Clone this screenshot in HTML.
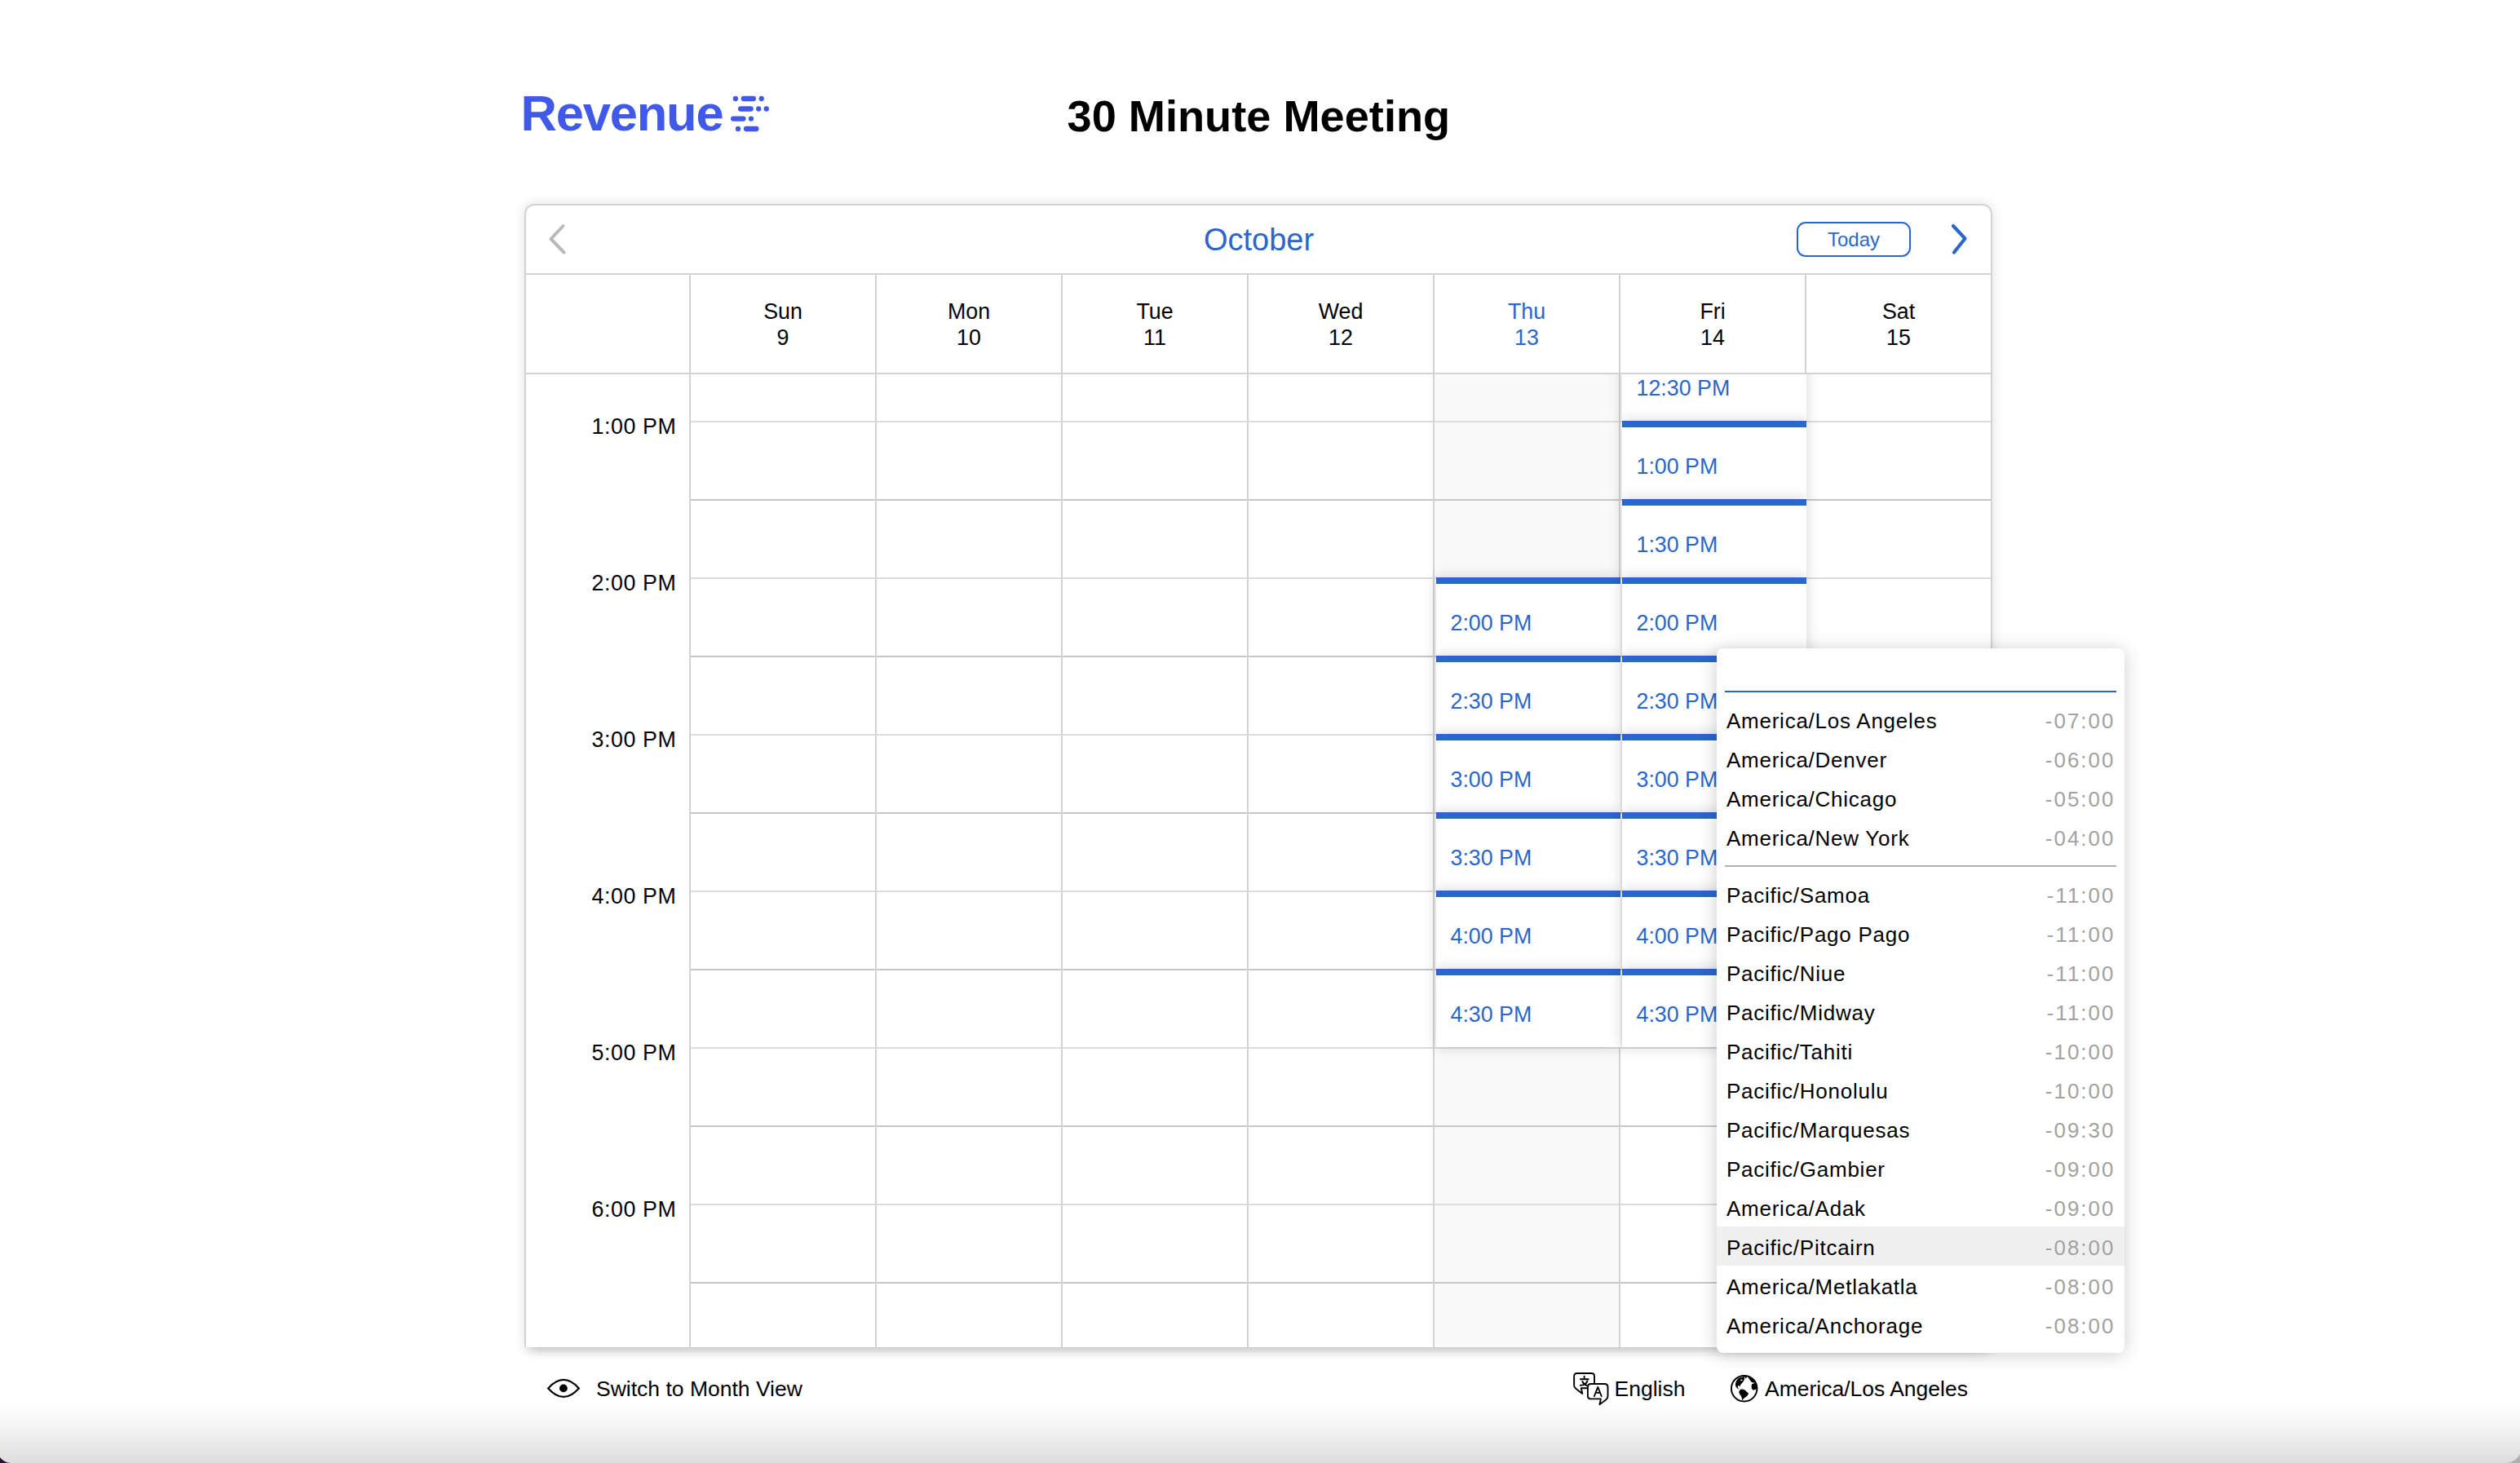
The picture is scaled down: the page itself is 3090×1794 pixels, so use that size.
<!DOCTYPE html>
<html><head><meta charset="utf-8"><title>30 Minute Meeting</title>
<style>
html,body{margin:0;padding:0;}
body{width:3090px;height:1794px;position:relative;overflow:hidden;background:#fff;font-family:"Liberation Sans",sans-serif;}
.a{position:absolute;}
.t{position:absolute;white-space:nowrap;}
.card{position:absolute;width:226px;height:88px;border-top:8px solid #2a66cb;background:#fff;box-shadow:0 0 16px rgba(0,0,0,0.17);}
.card span{position:absolute;left:17.5px;font-size:26.8px;line-height:26.8px;color:#2a66cb;white-space:nowrap;}
</style></head><body>
<div class="t" style="top:108.14px;font-size:61.5px;line-height:61.5px;color:#4159e8;font-weight:700;letter-spacing:-1.2px;left:638.50px;">Revenue</div>
<svg class="a" style="left:890px;top:112px" width="56" height="54" viewBox="890 112 56 54">
<g stroke="#4159e8" stroke-width="6.3" stroke-linecap="round" fill="none">
<path d="M901.9 121 L901.9 121 M911.85 121 L923.85 121 M933.7 121 L933.7 121"/>
<path d="M908.15 133.5 L920.65 133.5 M930.2 133.5 L930.2 133.5 M939.7 133.5 L939.7 133.5"/>
<path d="M899.15 145.6 L911.45 145.6 M921 145.6 L921 145.6"/>
<path d="M905 158 L905 158 M915.05 158 L927.35 158"/>
</g></svg>
<div class="t" style="top:114.92px;font-size:54.2px;line-height:54.2px;color:#000;font-weight:700;left:1308.50px;">30 Minute Meeting</div>
<div class="a" style="left:643px;top:250px;width:1800px;height:1402px;background:#fff;box-shadow:0 0 14px rgba(0,0,0,0.13);border-radius:12px 12px 0 0"></div>
<div class="a" style="left:649px;top:1612px;width:1788px;height:40px;background:#fff;box-shadow:0 5px 14px rgba(0,0,0,0.19);clip-path:inset(40px -40px -40px -40px)"></div>
<div class="a" style="left:643px;top:459px;width:1800px;height:1193px;overflow:hidden">
<div class="a" style="left:1116px;top:0;width:226px;height:1193px;background:#f9f9f9"></div>
<div class="a" style="left:204px;top:57px;width:1594px;height:2px;background:#dcdcdc"></div>
<div class="a" style="left:204px;top:153px;width:1594px;height:2px;background:#c6c6c6"></div>
<div class="a" style="left:204px;top:249px;width:1594px;height:2px;background:#dcdcdc"></div>
<div class="a" style="left:204px;top:345px;width:1594px;height:2px;background:#c6c6c6"></div>
<div class="a" style="left:204px;top:441px;width:1594px;height:2px;background:#dcdcdc"></div>
<div class="a" style="left:204px;top:537px;width:1594px;height:2px;background:#c6c6c6"></div>
<div class="a" style="left:204px;top:633px;width:1594px;height:2px;background:#dcdcdc"></div>
<div class="a" style="left:204px;top:729px;width:1594px;height:2px;background:#c6c6c6"></div>
<div class="a" style="left:204px;top:825px;width:1594px;height:2px;background:#dcdcdc"></div>
<div class="a" style="left:204px;top:921px;width:1594px;height:2px;background:#c6c6c6"></div>
<div class="a" style="left:204px;top:1017px;width:1594px;height:2px;background:#dcdcdc"></div>
<div class="a" style="left:204px;top:1113px;width:1594px;height:2px;background:#c6c6c6"></div>
<div class="a" style="left:202px;top:0;width:2px;height:1193px;background:#d3d3d3"></div>
<div class="a" style="left:430px;top:0;width:2px;height:1193px;background:#d3d3d3"></div>
<div class="a" style="left:658px;top:0;width:2px;height:1193px;background:#d3d3d3"></div>
<div class="a" style="left:886px;top:0;width:2px;height:1193px;background:#d3d3d3"></div>
<div class="a" style="left:1114px;top:0;width:2px;height:1193px;background:#d3d3d3"></div>
<div class="a" style="left:1342px;top:0;width:2px;height:1193px;background:#d3d3d3"></div>
<div class="a" style="left:1570px;top:0;width:2px;height:1193px;background:#d3d3d3"></div>
<div class="t" style="right:1613.5px;top:51.31px;font-size:26.8px;line-height:26.8px;text-align:right;letter-spacing:0.6px">1:00 PM</div>
<div class="t" style="right:1613.5px;top:243.31px;font-size:26.8px;line-height:26.8px;text-align:right;letter-spacing:0.6px">2:00 PM</div>
<div class="t" style="right:1613.5px;top:435.31px;font-size:26.8px;line-height:26.8px;text-align:right;letter-spacing:0.6px">3:00 PM</div>
<div class="t" style="right:1613.5px;top:627.31px;font-size:26.8px;line-height:26.8px;text-align:right;letter-spacing:0.6px">4:00 PM</div>
<div class="t" style="right:1613.5px;top:819.31px;font-size:26.8px;line-height:26.8px;text-align:right;letter-spacing:0.6px">5:00 PM</div>
<div class="t" style="right:1613.5px;top:1011.31px;font-size:26.8px;line-height:26.8px;text-align:right;letter-spacing:0.6px">6:00 PM</div>
<div class="card" style="left:1118px;top:249px"><span style="top:35.31px">2:00 PM</span></div>
<div class="card" style="left:1118px;top:345px"><span style="top:35.31px">2:30 PM</span></div>
<div class="card" style="left:1118px;top:441px"><span style="top:35.31px">3:00 PM</span></div>
<div class="card" style="left:1118px;top:537px"><span style="top:35.31px">3:30 PM</span></div>
<div class="card" style="left:1118px;top:633px"><span style="top:35.31px">4:00 PM</span></div>
<div class="card" style="left:1118px;top:729px"><span style="top:35.31px">4:30 PM</span></div>
<div class="card" style="left:1346px;top:-39px"><span style="top:35.31px">12:30 PM</span></div>
<div class="card" style="left:1346px;top:57px"><span style="top:35.31px">1:00 PM</span></div>
<div class="card" style="left:1346px;top:153px"><span style="top:35.31px">1:30 PM</span></div>
<div class="card" style="left:1346px;top:249px"><span style="top:35.31px">2:00 PM</span></div>
<div class="card" style="left:1346px;top:345px"><span style="top:35.31px">2:30 PM</span></div>
<div class="card" style="left:1346px;top:441px"><span style="top:35.31px">3:00 PM</span></div>
<div class="card" style="left:1346px;top:537px"><span style="top:35.31px">3:30 PM</span></div>
<div class="card" style="left:1346px;top:633px"><span style="top:35.31px">4:00 PM</span></div>
<div class="card" style="left:1346px;top:729px"><span style="top:35.31px">4:30 PM</span></div>
</div>
<div class="a" style="left:643px;top:250px;width:1800px;height:1402px;border:2px solid #d3d3d3;border-bottom:none;border-radius:12px 12px 0 0;box-sizing:border-box"></div>
<div class="a" style="left:645px;top:335px;width:1796px;height:2px;background:#d3d3d3"></div>
<div class="a" style="left:645px;top:457px;width:1796px;height:2px;background:#d3d3d3"></div>
<div class="a" style="left:845px;top:337px;width:2px;height:120px;background:#d3d3d3"></div>
<div class="a" style="left:1073px;top:337px;width:2px;height:120px;background:#d3d3d3"></div>
<div class="a" style="left:1301px;top:337px;width:2px;height:120px;background:#d3d3d3"></div>
<div class="a" style="left:1529px;top:337px;width:2px;height:120px;background:#d3d3d3"></div>
<div class="a" style="left:1757px;top:337px;width:2px;height:120px;background:#d3d3d3"></div>
<div class="a" style="left:1985px;top:337px;width:2px;height:120px;background:#d3d3d3"></div>
<div class="a" style="left:2213px;top:337px;width:2px;height:120px;background:#d3d3d3"></div>
<div class="t" style="top:369.11px;font-size:26.8px;line-height:26.8px;color:#000;left:847.00px;width:226px;text-align:center;">Sun</div>
<div class="t" style="top:401.31px;font-size:26.8px;line-height:26.8px;color:#000;left:847.00px;width:226px;text-align:center;">9</div>
<div class="t" style="top:369.11px;font-size:26.8px;line-height:26.8px;color:#000;left:1075.00px;width:226px;text-align:center;">Mon</div>
<div class="t" style="top:401.31px;font-size:26.8px;line-height:26.8px;color:#000;left:1075.00px;width:226px;text-align:center;">10</div>
<div class="t" style="top:369.11px;font-size:26.8px;line-height:26.8px;color:#000;left:1303.00px;width:226px;text-align:center;">Tue</div>
<div class="t" style="top:401.31px;font-size:26.8px;line-height:26.8px;color:#000;left:1303.00px;width:226px;text-align:center;">11</div>
<div class="t" style="top:369.11px;font-size:26.8px;line-height:26.8px;color:#000;left:1531.00px;width:226px;text-align:center;">Wed</div>
<div class="t" style="top:401.31px;font-size:26.8px;line-height:26.8px;color:#000;left:1531.00px;width:226px;text-align:center;">12</div>
<div class="t" style="top:369.11px;font-size:26.8px;line-height:26.8px;color:#2a66cb;left:1759.00px;width:226px;text-align:center;">Thu</div>
<div class="t" style="top:401.31px;font-size:26.8px;line-height:26.8px;color:#2a66cb;left:1759.00px;width:226px;text-align:center;">13</div>
<div class="t" style="top:369.11px;font-size:26.8px;line-height:26.8px;color:#000;left:1987.00px;width:226px;text-align:center;">Fri</div>
<div class="t" style="top:401.31px;font-size:26.8px;line-height:26.8px;color:#000;left:1987.00px;width:226px;text-align:center;">14</div>
<div class="t" style="top:369.11px;font-size:26.8px;line-height:26.8px;color:#000;left:2215.00px;width:226px;text-align:center;">Sat</div>
<div class="t" style="top:401.31px;font-size:26.8px;line-height:26.8px;color:#000;left:2215.00px;width:226px;text-align:center;">15</div>
<div class="t" style="top:274.83px;font-size:38px;line-height:38px;color:#2a66cb;left:1343.50px;width:400px;text-align:center;">October</div>
<div class="a" style="left:2203px;top:272px;width:140px;height:43px;border:2px solid #2a66cb;border-radius:11px;box-sizing:border-box"></div>
<div class="t" style="top:281.68px;font-size:24px;line-height:24px;color:#2a66cb;left:2203.00px;width:140px;text-align:center;">Today</div>
<svg class="a" style="left:660px;top:265px" width="50" height="56" viewBox="660 265 50 56"><path d="M690.5 277 L675.5 293 L691.5 309.5" stroke="#b9b9b9" stroke-width="4" fill="none" stroke-linecap="round" stroke-linejoin="round"/></svg>
<svg class="a" style="left:2380px;top:265px" width="50" height="56" viewBox="2380 265 50 56"><path d="M2395 277 L2409.5 292.5 L2396 309.5" stroke="#2a66cb" stroke-width="4.2" fill="none" stroke-linecap="round" stroke-linejoin="round"/></svg>
<div class="a" style="left:2105px;top:795px;width:500px;height:864px;background:#fff;border-radius:8px;box-shadow:0 2px 22px rgba(0,0,0,0.20)"></div>
<div class="a" style="left:2115px;top:847px;width:480px;height:2px;background:#2a66cb"></div>
<div class="a" style="left:2105px;top:1504px;width:500px;height:48px;background:#f0f0f0"></div>
<div class="t" style="top:871.29px;font-size:26px;line-height:26px;color:#000;letter-spacing:0.75px;left:2117.00px;">America/Los Angeles</div>
<div class="t" style="top:871.29px;font-size:26px;line-height:26px;color:#a2a2a2;letter-spacing:2.0px;right:496.50px;text-align:right;">-07:00</div>
<div class="t" style="top:919.29px;font-size:26px;line-height:26px;color:#000;letter-spacing:0.75px;left:2117.00px;">America/Denver</div>
<div class="t" style="top:919.29px;font-size:26px;line-height:26px;color:#a2a2a2;letter-spacing:2.0px;right:496.50px;text-align:right;">-06:00</div>
<div class="t" style="top:967.29px;font-size:26px;line-height:26px;color:#000;letter-spacing:0.75px;left:2117.00px;">America/Chicago</div>
<div class="t" style="top:967.29px;font-size:26px;line-height:26px;color:#a2a2a2;letter-spacing:2.0px;right:496.50px;text-align:right;">-05:00</div>
<div class="t" style="top:1015.29px;font-size:26px;line-height:26px;color:#000;letter-spacing:0.75px;left:2117.00px;">America/New York</div>
<div class="t" style="top:1015.29px;font-size:26px;line-height:26px;color:#a2a2a2;letter-spacing:2.0px;right:496.50px;text-align:right;">-04:00</div>
<div class="a" style="left:2115px;top:1061px;width:480px;height:2px;background:#b0b0b0"></div>
<div class="t" style="top:1085.29px;font-size:26px;line-height:26px;color:#000;letter-spacing:0.75px;left:2117.00px;">Pacific/Samoa</div>
<div class="t" style="top:1085.29px;font-size:26px;line-height:26px;color:#a2a2a2;letter-spacing:2.0px;right:496.50px;text-align:right;">-11:00</div>
<div class="t" style="top:1133.29px;font-size:26px;line-height:26px;color:#000;letter-spacing:0.75px;left:2117.00px;">Pacific/Pago Pago</div>
<div class="t" style="top:1133.29px;font-size:26px;line-height:26px;color:#a2a2a2;letter-spacing:2.0px;right:496.50px;text-align:right;">-11:00</div>
<div class="t" style="top:1181.29px;font-size:26px;line-height:26px;color:#000;letter-spacing:0.75px;left:2117.00px;">Pacific/Niue</div>
<div class="t" style="top:1181.29px;font-size:26px;line-height:26px;color:#a2a2a2;letter-spacing:2.0px;right:496.50px;text-align:right;">-11:00</div>
<div class="t" style="top:1229.29px;font-size:26px;line-height:26px;color:#000;letter-spacing:0.75px;left:2117.00px;">Pacific/Midway</div>
<div class="t" style="top:1229.29px;font-size:26px;line-height:26px;color:#a2a2a2;letter-spacing:2.0px;right:496.50px;text-align:right;">-11:00</div>
<div class="t" style="top:1277.29px;font-size:26px;line-height:26px;color:#000;letter-spacing:0.75px;left:2117.00px;">Pacific/Tahiti</div>
<div class="t" style="top:1277.29px;font-size:26px;line-height:26px;color:#a2a2a2;letter-spacing:2.0px;right:496.50px;text-align:right;">-10:00</div>
<div class="t" style="top:1325.29px;font-size:26px;line-height:26px;color:#000;letter-spacing:0.75px;left:2117.00px;">Pacific/Honolulu</div>
<div class="t" style="top:1325.29px;font-size:26px;line-height:26px;color:#a2a2a2;letter-spacing:2.0px;right:496.50px;text-align:right;">-10:00</div>
<div class="t" style="top:1373.29px;font-size:26px;line-height:26px;color:#000;letter-spacing:0.75px;left:2117.00px;">Pacific/Marquesas</div>
<div class="t" style="top:1373.29px;font-size:26px;line-height:26px;color:#a2a2a2;letter-spacing:2.0px;right:496.50px;text-align:right;">-09:30</div>
<div class="t" style="top:1421.29px;font-size:26px;line-height:26px;color:#000;letter-spacing:0.75px;left:2117.00px;">Pacific/Gambier</div>
<div class="t" style="top:1421.29px;font-size:26px;line-height:26px;color:#a2a2a2;letter-spacing:2.0px;right:496.50px;text-align:right;">-09:00</div>
<div class="t" style="top:1469.29px;font-size:26px;line-height:26px;color:#000;letter-spacing:0.75px;left:2117.00px;">America/Adak</div>
<div class="t" style="top:1469.29px;font-size:26px;line-height:26px;color:#a2a2a2;letter-spacing:2.0px;right:496.50px;text-align:right;">-09:00</div>
<div class="t" style="top:1517.29px;font-size:26px;line-height:26px;color:#000;letter-spacing:0.75px;left:2117.00px;">Pacific/Pitcairn</div>
<div class="t" style="top:1517.29px;font-size:26px;line-height:26px;color:#a2a2a2;letter-spacing:2.0px;right:496.50px;text-align:right;">-08:00</div>
<div class="t" style="top:1565.29px;font-size:26px;line-height:26px;color:#000;letter-spacing:0.75px;left:2117.00px;">America/Metlakatla</div>
<div class="t" style="top:1565.29px;font-size:26px;line-height:26px;color:#a2a2a2;letter-spacing:2.0px;right:496.50px;text-align:right;">-08:00</div>
<div class="t" style="top:1613.29px;font-size:26px;line-height:26px;color:#000;letter-spacing:0.75px;left:2117.00px;">America/Anchorage</div>
<div class="t" style="top:1613.29px;font-size:26px;line-height:26px;color:#a2a2a2;letter-spacing:2.0px;right:496.50px;text-align:right;">-08:00</div>
<svg class="a" style="left:665px;top:1685px" width="52" height="36" viewBox="665 1685 52 36">
<path d="M672.2 1702.4 Q691 1681.5 709.8 1702.4 Q691 1723.3 672.2 1702.4 Z" stroke="#000" stroke-width="2.2" fill="none" stroke-linejoin="miter"/>
<circle cx="690.9" cy="1702.4" r="4.9" fill="#000"/></svg>
<div class="t" style="top:1689.57px;font-size:26.5px;line-height:26.5px;color:#000;left:731.00px;">Switch to Month View</div>
<svg class="a" style="left:1920px;top:1675px" width="60" height="55" viewBox="0 0 60 55">
<g stroke="#000" stroke-width="1.9" fill="none" stroke-linecap="round" stroke-linejoin="round">
<path d="M26.3 27.3 L18.8 27.3 L20.3 34.0 L12.2 27.8 Q10.15 26.2 10.15 23.8 L10.15 12.5 Q10.15 9 13.65 9 L31.5 9 Q35 9 35 12.5 L35 22"/>
<path d="M51.5 37 L51.5 26 Q51.5 22 47.5 22 L30.9 22 Q26.9 22 26.9 26 L26.9 36.4 Q26.9 40.4 30.9 40.4 L42.9 40.4 L41.4 47.2 L48.8 41.8 Q51.5 39.6 51.5 37 Z"/>
<path d="M22.6 12.6 L22.6 15.0 M17.9 16.2 L27.6 16.2 M20.3 18.9 Q21.8 22.8 26.2 24.2 M26.4 18.4 Q24.6 23.6 17.9 23.8"/>
<path d="M34.9 37.0 L39.3 25.9 L43.7 37.0 M36.6 32.9 L42.0 32.9"/>
</g></svg>
<div class="t" style="top:1689.57px;font-size:26.5px;line-height:26.5px;color:#000;left:1979.50px;">English</div>
<svg class="a" style="left:2115px;top:1680px" width="50" height="45" viewBox="0 0 50 45">
<circle cx="23.7" cy="22.7" r="15.75" stroke="#000" stroke-width="1.95" fill="none"/>
<path fill="#000" d="M17.2 9.8 L21.5 8.5 L24.6 8.1 L24.0 10.1 L23.4 12.9 L21.5 15.4 L19.7 17.5 L18.8 18.8 L18.5 20.9 L17.5 19.1 L16.0 19.4 L15.7 20.9 L17.2 23.4 L18.1 24.3 L16.0 23.1 L13.8 20.9 L12.9 18.5 L13.2 15.4 L14.8 12.3 Z"/>
<ellipse cx="20.4" cy="12.3" rx="1.2" ry="0.9" fill="#fff"/>
<path fill="#000" d="M24.3 7.8 L27.1 8.1 L25.8 10.8 Z"/>
<path fill="#000" d="M27.7 8.1 L32.3 9.8 L36.3 12.9 L37.8 15.4 L34.7 15.4 L32.6 14.8 L30.7 12.3 L29.2 10.1 Z"/>
<path fill="#000" d="M33.2 17.2 L36.3 16 L38.4 16.6 L39.7 20 L39.4 22.8 L36.9 24.3 L34.4 24.6 L32.9 22.8 L32.6 19.7 Z"/>
<path fill="#000" d="M19.1 23.7 L21.5 23.4 L24.6 24.6 L26.8 26.8 L28.9 28.3 L28.6 30.1 L27.1 32 L24.6 33.8 L22.1 36 L21.2 37.5 L20.9 34.7 L20 32 L17.8 28.9 L17.2 26.8 Z"/>
</svg>
<div class="t" style="top:1689.57px;font-size:26.5px;line-height:26.5px;color:#000;left:2164.00px;">America/Los Angeles</div>
<div class="a" style="left:0;top:1715px;width:3090px;height:79px;background:linear-gradient(rgba(0,0,0,0),rgba(0,0,0,0.02) 25%,rgba(0,0,0,0.065) 60%,rgba(0,0,0,0.135))"></div>
<div class="a" style="left:0;top:1776px;width:15px;height:18px;background:radial-gradient(circle 17.5px at 14px 0.5px, rgba(0,0,0,0) 17px, #2b1030 18px)"></div>
<div class="a" style="left:3071px;top:1774px;width:19px;height:20px;background:radial-gradient(circle 20px at 1px 0px, rgba(0,0,0,0) 19.5px, #b0b0b0 20.5px)"></div>
</body></html>
